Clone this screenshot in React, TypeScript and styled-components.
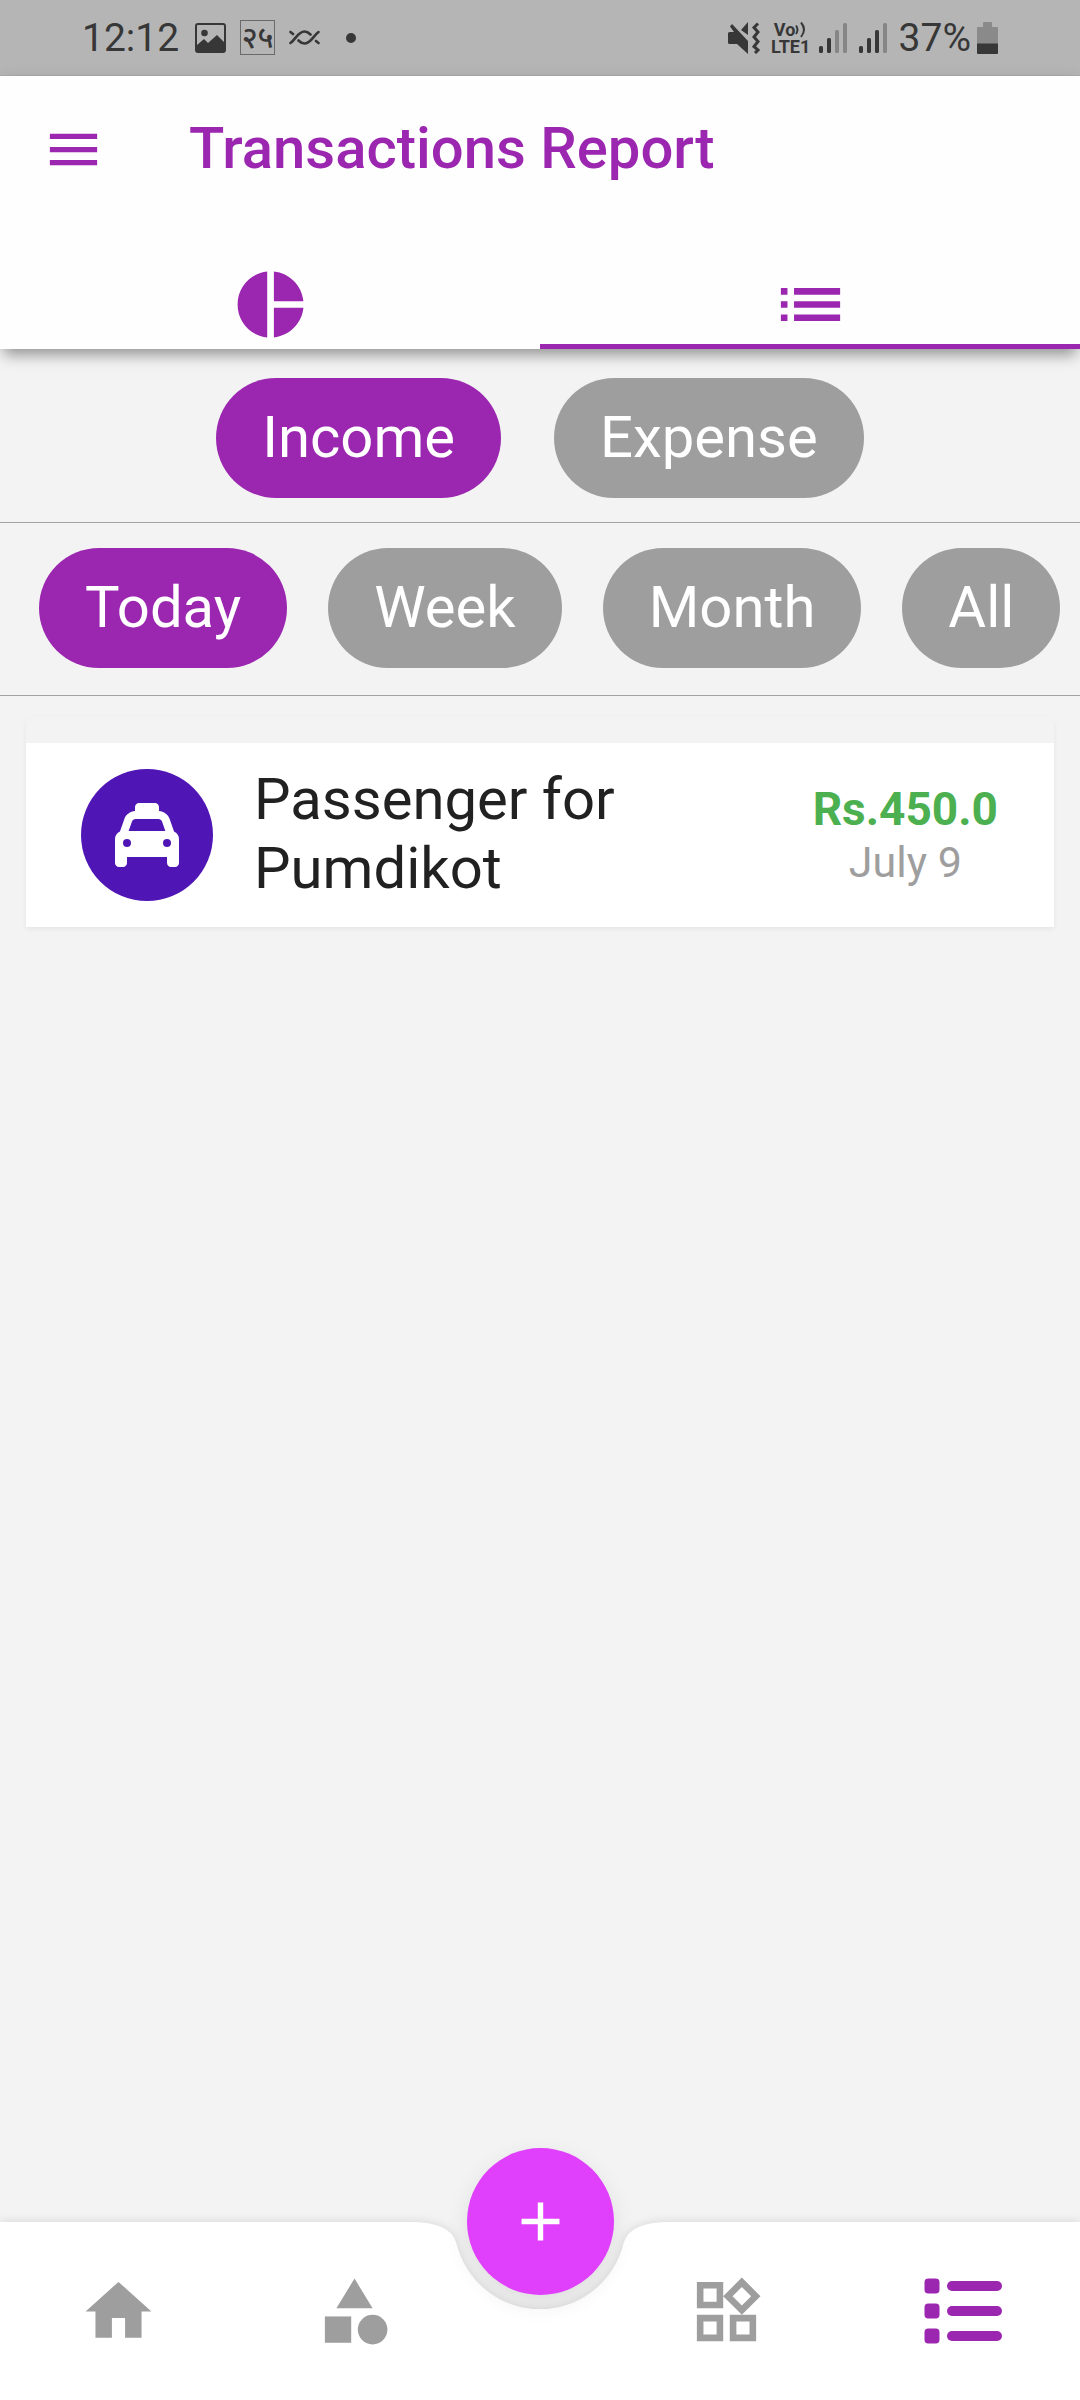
import React, { useState } from "react";
import styled, { createGlobalStyle } from "styled-components";
import {
  MdAdd,
  MdCategory,
  MdHome,
  MdList,
  MdMenu,
  MdOutlineWidgets,
  MdPieChart,
} from "react-icons/md";

const color = {
  primary: "#9b27b0",
  accent: "#e040fb",
  muted: "#9e9e9e",
  page: "#f3f3f3",
  ink: "#212121",
  status: "#373737",
};

const GlobalStyle = createGlobalStyle`
  * { box-sizing: border-box; }
  body { margin: 0; background: ${color.page}; }
  button { font: inherit; color: inherit; border: 0; padding: 0; margin: 0; background: none; cursor: pointer; }
  svg { display: block; flex: none; }
`;

const Screen = styled.div`
  display: flex;
  flex-direction: column;
  min-height: 100vh;
  overflow: hidden;
  font-family: Roboto, "Noto Sans", sans-serif;
  font-size: 58px;
  color: ${color.ink};
`;

/* Status bar */

const StatusBar = styled.div`
  display: flex;
  justify-content: space-between;
  height: 76px;
  padding: 0 82px;
  background: #b5b5b5;
  border-bottom: 1px solid #acacac;
  color: ${color.status};
  font-size: 39px;
  line-height: 46px;
`;

const StatusGroup = styled.div<{ $gap: number }>`
  display: flex;
  align-items: center;
  gap: ${(p) => p.$gap}px;
`;

const Clock = styled.span`
  padding-right: 2px;
`;

const DateBadge = styled.span`
  display: flex;
  align-items: center;
  justify-content: center;
  width: 35px;
  height: 35px;
  border: 1px solid #6a6a6a;
  font-size: 30px;
  font-weight: 500;
  line-height: 33px;
`;

const Volte = styled.span`
  display: flex;
  flex-direction: column;
  align-items: center;
  width: 38px;
  font-size: 18px;
  font-weight: 700;
  line-height: 17px;
`;

const VolteTop = styled.span`
  display: flex;
  align-items: center;
`;

/* App bar */

const AppBar = styled.header`
  position: relative;
  background: #fefefe;
  box-shadow: 0 10px 14px -4px rgba(0, 0, 0, 0.34), 0 2px 16px -2px rgba(0, 0, 0, 0.12);
`;

const Toolbar = styled.div`
  display: flex;
  align-items: center;
  gap: 84px;
  height: 147px;
  padding: 0 42px;
  color: ${color.primary};
`;

const Title = styled.h1`
  margin: 0;
  padding-bottom: 2px;
  font-size: 58px;
  font-weight: 500;
  line-height: 69px;
`;

const Tabs = styled.div`
  display: flex;
`;

const Tab = styled.button<{ $active: boolean }>`
  display: flex;
  flex: 1;
  justify-content: center;
  align-items: flex-end;
  height: 126px;
  border-bottom: 5px solid ${(p) => (p.$active ? color.primary : "transparent")};
  color: ${color.primary};
`;

/* Filters */

const FilterRow = styled.div<{ $centered?: boolean }>`
  display: flex;
  justify-content: ${(p) => (p.$centered ? "center" : "flex-start")};
  gap: ${(p) => (p.$centered ? 53 : 41)}px;
  padding: ${(p) => (p.$centered ? "29px 39px 24px" : "25px 39px 27px")};
  border-bottom: 1px solid #a2a2a2;
  overflow: hidden;
`;

const Chip = styled.button<{ $active: boolean }>`
  flex: none;
  height: 120px;
  padding: 0 46px 2px;
  border-radius: 60px;
  background: ${(p) => (p.$active ? color.primary : color.muted)};
  color: #fff;
  font-size: 58px;
  line-height: 69px;
`;

/* Transactions */

const Main = styled.main`
  flex: 1;
`;

const Card = styled.ul`
  list-style: none;
  margin: 20px 26px 0;
  padding: 27px 0 0;
  border-radius: 8px 8px 2px 2px;
  box-shadow: 0 2px 5px rgba(0, 0, 0, 0.06);
`;

const Item = styled.li`
  display: flex;
  align-items: center;
  gap: 41px;
  padding: 22px 56px 22px 55px;
  background: #fff;
`;

const Avatar = styled.span`
  display: flex;
  flex: none;
  align-items: center;
  justify-content: center;
  width: 132px;
  height: 132px;
  border-radius: 50%;
  background: #5015b5;
  color: #fff;
`;

const ItemTitle = styled.span`
  flex: 1;
  padding-bottom: 2px;
  line-height: 69px;
`;

const Figures = styled.span`
  display: flex;
  flex-direction: column;
  align-items: center;
`;

const Amount = styled.strong`
  color: #4caf50;
  font-size: 46px;
  font-weight: 700;
  line-height: 54px;
`;

const When = styled.span`
  color: ${color.muted};
  font-size: 43px;
  line-height: 52px;
`;

/* Bottom navigation */

const BottomNav = styled.nav`
  position: relative;
  display: flex;
  height: 178px;
`;

const NavBackground = styled.div`
  position: absolute;
  inset: 0;
  display: grid;
  grid-template-columns: 1fr 260px 1fr;
  filter: drop-shadow(0 0 5px rgba(0, 0, 0, 0.12));
`;

const NavFill = styled.div`
  background: #fff;
`;

const NavLink = styled.a<{ $active?: boolean }>`
  position: relative;
  display: flex;
  flex: 1;
  align-items: center;
  justify-content: center;
  color: ${(p) => (p.$active ? color.primary : color.muted)};
`;

const FabSlot = styled.div`
  position: relative;
  display: flex;
  flex: none;
  justify-content: center;
  width: 136px;
`;

const Fab = styled.button`
  display: flex;
  flex: none;
  align-items: center;
  justify-content: center;
  width: 147px;
  height: 147px;
  margin-top: -74px;
  border-radius: 50%;
  background: ${color.accent};
  color: #fff;
  box-shadow: 0 8px 24px rgba(0, 0, 0, 0.09);
`;

const PhotoIcon = () => (
  <svg width="31" height="30" viewBox="0 0 31 30" fill="none">
    <rect x="1" y="1" width="29" height="28" rx="2" stroke="currentColor" strokeWidth="2" />
    <circle cx="9.500" cy="10" r="3.300" fill="currentColor" />
    <path d="M2 28V22l7-6 4 4 9-8 7 7v9z" fill="currentColor" />
  </svg>
);

const WaveIcon = () => (
  <svg width="31" height="15" viewBox="0 0 31 15" fill="none" stroke="currentColor" strokeWidth="2.600" strokeLinecap="round">
    <path d="M1.500 13C7 9 9 1.500 15.500 1.500c2.500 0 4.500 1.500 6 3" />
    <path d="M29.500 2C24 6 22 13.500 15.500 13.500c-2.500 0-4.500-1.500-6-3" />
    <path d="M1.500 2l2.500 2M27 11l2.500 2" />
  </svg>
);

const DotIcon = () => (
  <svg width="34" height="12" viewBox="0 0 34 12">
    <circle cx="17" cy="6" r="5" fill="currentColor" />
  </svg>
);

const MuteIcon = () => (
  <svg width="35" height="32" viewBox="0 0 35 32">
    <path d="M0 11.500q0-1.500 1.500-1.500H6l-4-5.500L4 2l16 17v13L9 22H1.500Q0 22 0 20.500zM13 8l7-8v13z" fill="currentColor" />
    <path d="M30 1.500l-4 4 4 4.500-4 5 4 4.500-4 5 4 3.500-3 3" fill="none" stroke="currentColor" strokeWidth="3" />
  </svg>
);

const VoiceWaves = () => (
  <svg width="12" height="17" viewBox="0 0 12 17" fill="none" stroke="currentColor" strokeWidth="2">
    <path d="M1 4.500q3 4 0 8.500M6 1.500q6 7 0 14.500" />
  </svg>
);

const SignalIcon = ({ level }: { level: number }) => (
  <svg width="31" height="30" viewBox="0 0 31 30">
    {[7, 15, 23, 30].map((h, i) => (
      <rect
        key={h}
        x={i * 8}
        y={30 - h}
        width="4"
        height={h}
        rx="1.500"
        fill={i < level ? color.status : "#868686"}
      />
    ))}
  </svg>
);

const BatteryIcon = () => (
  <svg width="21" height="32" viewBox="0 0 21 32">
    <path d="M6 1q0-1 1-1h7q1 0 1 1v4h5q1 0 1 1v16H0V6q0-1 1-1h5z" fill="#8a8a8a" />
    <path d="M0 21.500h21V31q0 1-1 1H1q-1 0-1-1z" fill="currentColor" />
  </svg>
);

const TaxiIcon = () => (
  <svg width="64" height="64" viewBox="0 0 512 512" fill="currentColor">
    <path d="M192 0c-17.700 0-32 14.300-32 32V64c0 .1 0 .1 0 .2c-38.600 2.200-72.300 27.300-85.200 64.100L39.600 228.800C16.400 238.400 0 261.300 0 288V432v48c0 17.700 14.300 32 32 32H64c17.700 0 32-14.300 32-32V432H416v48c0 17.700 14.300 32 32 32h32c17.700 0 32-14.300 32-32V432 288c0-26.700-16.400-49.600-39.600-59.200L437.200 128.300c-12.900-36.800-46.600-62-85.200-64.100c0-.1 0-.1 0-.2V32c0-17.700-14.300-32-32-32H192zM165.400 128H346.600c13.600 0 25.700 8.600 30.200 21.400L402.900 224H109.100l26.100-74.600c4.500-12.800 16.600-21.400 30.200-21.400zM96 288a32 32 0 1 1 0 64 32 32 0 1 1 0-64zm288 32a32 32 0 1 1 64 0 32 32 0 1 1 -64 0z" />
  </svg>
);

const RecordsIcon = () => (
  <svg width="80" height="80" viewBox="0 0 512 512" fill="currentColor">
    {[48, 208, 368].map((y) => (
      <React.Fragment key={y}>
        <rect x="16" y={y} width="96" height="96" rx="24" />
        <rect x="160" y={y + 16} width="352" height="64" rx="32" />
      </React.Fragment>
    ))}
  </svg>
);

const NotchShape = () => (
  <svg width="260" height="178" viewBox="0 0 260 178">
    <path d="M0 0Q41 0 46.400 21.300A86 86 0 0 0 213.600 21.300Q219 0 260 0V178H0z" fill="#fff" />
  </svg>
);

const kinds = ["Income", "Expense"];
const periods = ["Today", "Week", "Month", "All"];

export default function App() {
  const [tab, setTab] = useState("list");
  const [kind, setKind] = useState("Income");
  const [period, setPeriod] = useState("Today");

  return (
    <Screen>
      <GlobalStyle />
      <StatusBar>
        <StatusGroup $gap={14}>
          <Clock>12:12</Clock>
          <PhotoIcon />
          <DateBadge>२५</DateBadge>
          <WaveIcon />
          <DotIcon />
        </StatusGroup>
        <StatusGroup $gap={9}>
          <MuteIcon />
          <Volte>
            <VolteTop>
              Vo
              <VoiceWaves />
            </VolteTop>
            <span>LTE1</span>
          </Volte>
          <SignalIcon level={2} />
          <SignalIcon level={3} />
          <StatusGroup $gap={6}>
            <span>37%</span>
            <BatteryIcon />
          </StatusGroup>
        </StatusGroup>
      </StatusBar>

      <AppBar>
        <Toolbar>
          <button type="button" aria-label="Menu">
            <MdMenu size={63} />
          </button>
          <Title>Transactions Report</Title>
        </Toolbar>
        <Tabs role="tablist">
          <Tab
            type="button"
            role="tab"
            aria-label="Chart"
            aria-selected={tab === "chart"}
            $active={tab === "chart"}
            onClick={() => setTab("chart")}
          >
            <MdPieChart size={79} />
          </Tab>
          <Tab
            type="button"
            role="tab"
            aria-label="List"
            aria-selected={tab === "list"}
            $active={tab === "list"}
            onClick={() => setTab("list")}
          >
            <MdList size={79} />
          </Tab>
        </Tabs>
      </AppBar>

      <Main>
        <FilterRow $centered>
          {kinds.map((k) => (
            <Chip key={k} type="button" aria-pressed={k === kind} $active={k === kind} onClick={() => setKind(k)}>
              {k}
            </Chip>
          ))}
        </FilterRow>
        <FilterRow>
          {periods.map((p) => (
            <Chip key={p} type="button" aria-pressed={p === period} $active={p === period} onClick={() => setPeriod(p)}>
              {p}
            </Chip>
          ))}
        </FilterRow>

        <Card>
          <Item>
            <Avatar>
              <TaxiIcon />
            </Avatar>
            <ItemTitle>Passenger for Pumdikot</ItemTitle>
            <Figures>
              <Amount>Rs.450.0</Amount>
              <When>July 9</When>
            </Figures>
          </Item>
        </Card>
      </Main>

      <BottomNav>
        <NavBackground>
          <NavFill />
          <NotchShape />
          <NavFill />
        </NavBackground>
        <NavLink href="#home" aria-label="Home">
          <MdHome size={79} />
        </NavLink>
        <NavLink href="#categories" aria-label="Categories">
          <MdCategory size={79} />
        </NavLink>
        <FabSlot>
          <Fab type="button" aria-label="Add transaction">
            <MdAdd size={65} />
          </Fab>
        </FabSlot>
        <NavLink href="#widgets" aria-label="Widgets">
          <MdOutlineWidgets size={79} />
        </NavLink>
        <NavLink href="#report" aria-label="Report" $active>
          <RecordsIcon />
        </NavLink>
      </BottomNav>
    </Screen>
  );
}
